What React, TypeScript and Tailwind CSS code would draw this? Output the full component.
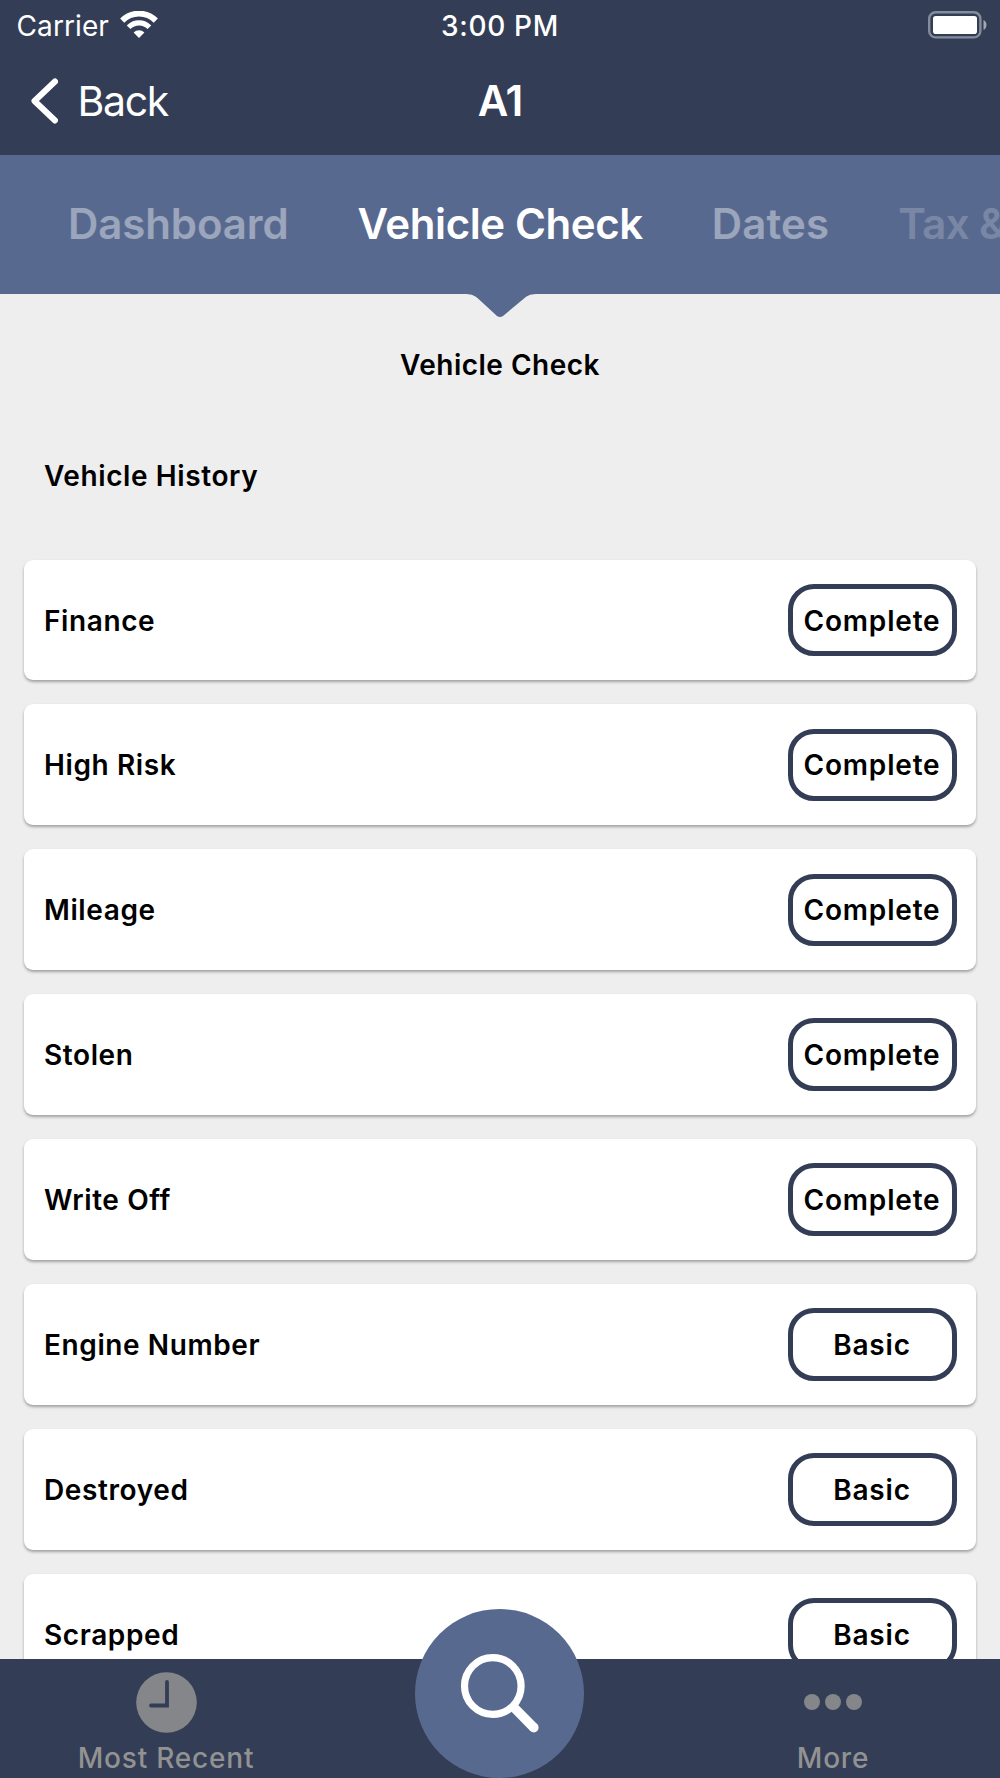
import React from "react";

const checks = [
  { name: "Finance", level: "Complete" },
  { name: "High Risk", level: "Complete" },
  { name: "Mileage", level: "Complete" },
  { name: "Stolen", level: "Complete" },
  { name: "Write Off", level: "Complete" },
  { name: "Engine Number", level: "Basic" },
  { name: "Destroyed", level: "Basic" },
  { name: "Scrapped", level: "Basic" },
];

const WifiIcon = () => (
  <svg width="38" height="28" viewBox="0 0 38 28" fill="none" stroke="#fff">
    <path d="M2.2 9.6a23.6 23.6 0 0 1 33.6 0" strokeWidth="5.8" />
    <path d="M8.6 16.2a14.6 14.6 0 0 1 20.8 0" strokeWidth="5.2" />
    <path d="M13.6 21.6a7.6 7.6 0 0 1 10.8 0L19 27z" fill="#fff" stroke="none" />
  </svg>
);

const BatteryIcon = () => (
  <svg width="60" height="28" viewBox="0 0 60 28" fill="none">
    <rect x="1.2" y="1.2" width="51.2" height="25.2" rx="6.5" stroke="#858c9a" strokeWidth="2.4" />
    <rect x="5" y="5" width="44" height="18" rx="2.8" fill="#fff" />
    <path d="M55.5 9v10c1.9-.9 3-2.7 3-5s-1.1-4.1-3-5z" fill="#a3a8b2" />
  </svg>
);

const StatusBar = () => {
  return (
    <div className="grid h-[50px] grid-cols-3 items-center text-[28px] leading-none text-white">
      <div className="flex items-center gap-[11px] pl-[16.5px]">
        <span className="pt-px tracking-[0.1px]">Carrier</span>
        <WifiIcon />
      </div>
      <span className="pt-px text-center font-medium tracking-[0.7px]">3:00 PM</span>
      <div className="flex justify-end pr-3">
        <BatteryIcon />
      </div>
    </div>
  );
};

const Header = () => {
  return (
    <div className="grid h-[105px] grid-cols-3 items-center pb-[3px] text-white">
      <div className="flex items-center gap-[19.5px] pl-[29px]">
        <svg width="29" height="46" viewBox="0 0 29 46" fill="none">
          <path
            d="M26 3.500 5.500 23 26 42.500"
            stroke="#fff"
            strokeWidth="6"
            strokeLinecap="round"
            strokeLinejoin="round"
          />
        </svg>
        <span className="pt-px text-[41px] leading-none tracking-[-1.3px]">Back</span>
      </div>
      <span className="text-center text-[42px] leading-none font-semibold tracking-[-1px]">A1</span>
    </div>
  );
};

const Tabs = () => {
  return (
    <div className="relative h-[139px] shrink-0 bg-[#58698f]">
      <div className="flex h-full items-center gap-[69px] overflow-hidden pb-[2px] pl-[68px] text-[42px] leading-none font-semibold whitespace-nowrap text-white">
        <span className="tracking-[-0.1px] opacity-40">Dashboard</span>
        <span className="tracking-[-0.4px]">Vehicle Check</span>
        <span className="tracking-[0.1px] opacity-40">Dates</span>
        <span className="tracking-[-0.6px] opacity-20">Tax &amp; MOT</span>
      </div>
      {/* notch under the active tab */}
      <svg className="absolute top-full left-[462px]" width="76" height="24" viewBox="0 0 76 24">
        <path d="M0 0h76c-6 0-10 .8-14 4.500L41 22q-3 2.200-6 0L16 4.500C12 .8 8 0 2 0z" fill="#58698f" />
      </svg>
    </div>
  );
};

const CheckRow = ({ name, level }: { name: string; level: string }) => {
  return (
    <div className="flex h-[120.9px] shrink-0 items-center justify-between rounded-[9px] bg-white pr-[19.5px] pl-5 shadow-[0_2px_3px_rgba(0,0,0,0.32)]">
      <span className="pt-px">{name}</span>
      <span className="flex h-[72.5px] w-[169px] items-center justify-center rounded-[26px] border-5 border-[#333d55] pt-px tracking-[0.8px]">
        {level}
      </span>
    </div>
  );
};

const TabBar = () => {
  return (
    <div className="relative flex h-[119px] shrink-0 justify-between bg-[#333d55] text-[28px] leading-none font-medium tracking-[0.8px] text-[#929292]">
      <div className="flex w-[332px] flex-col items-center pt-[12.5px]">
        <svg width="61" height="61" viewBox="0 0 61 61">
          <circle cx="30.500" cy="30.500" r="30.300" fill="#85868a" />
          <path d="M31 10v23.500H15" fill="none" stroke="#333d55" strokeWidth="3.800" strokeLinecap="round" />
        </svg>
        <span className="mt-[11.5px]">Most Recent</span>
      </div>
      <div className="flex w-[334px] flex-col items-center pt-[35px]">
        <div className="flex gap-[5px]">
          <div className="h-4 w-4 rounded-full bg-[#85868a]" />
          <div className="h-4 w-4 rounded-full bg-[#85868a]" />
          <div className="h-4 w-4 rounded-full bg-[#85868a]" />
        </div>
        <span className="mt-[34px]">More</span>
      </div>
      <div className="absolute bottom-0 left-[415px] h-[169px] w-[169px] rounded-full bg-[#58698f]">
        <svg width="169" height="169" viewBox="0 0 169 169" fill="none" stroke="#fff">
          <circle cx="77.800" cy="77" r="28.300" strokeWidth="7.200" />
          <path d="M98.500 98l20.300 20.700" strokeWidth="9.600" />
          <circle cx="118.800" cy="118.700" r="4.800" fill="#fff" stroke="none" />
        </svg>
      </div>
    </div>
  );
};

export default function App() {
  return (
    <div className="flex h-[1778px] w-[1000px] flex-col overflow-hidden bg-[#eeeeee] font-['Inter',sans-serif]">
      <div className="h-[155px] shrink-0 bg-[#333d55]">
        <StatusBar />
        <Header />
      </div>
      <Tabs />
      <div className="flex min-h-0 flex-1 flex-col overflow-hidden px-6 text-[28px] leading-none font-semibold tracking-[0.6px] text-black [font-variant-ligatures:none]">
        <div className="mt-[56.6px] shrink-0 text-center tracking-[0.5px]">Vehicle Check</div>
        <div className="mt-[83px] shrink-0 pl-5">Vehicle History</div>
        <div className="mt-[70px] flex flex-col gap-6">
          {checks.map((check) => (
            <CheckRow key={check.name} name={check.name} level={check.level} />
          ))}
        </div>
      </div>
      <TabBar />
    </div>
  );
}
